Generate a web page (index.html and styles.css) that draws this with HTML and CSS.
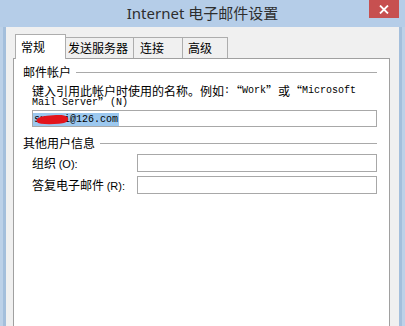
FILE: index.html
```html
<!DOCTYPE html>
<html lang="zh-CN">
<head>
<meta charset="utf-8">
<title>Internet 电子邮件设置</title>
<link rel="stylesheet" href="styles.css">
</head>
<body>
<div class="window">
  <div class="titlebar">
    <span class="spacer"></span>
    <span class="title">Internet 电子邮件设置</span>
    <span class="close">
      <svg width="10" height="9" viewBox="0 0 10 9"><path d="M1 0.5 L9 8.5 M9 0.5 L1 8.5" stroke="#fff" stroke-width="1.8" fill="none"/></svg>
    </span>
  </div>
  <div class="frame">
    <div class="client">
      <div class="tabs">
        <div class="tab tab-active">常规</div>
        <div class="tab tab-send">发送服务器</div>
        <div class="tab tab-conn">连接</div>
        <div class="tab tab-adv">高级</div>
      </div>
      <div class="panel">
        <section class="group">
          <div class="group-title">邮件帐户</div>
          <div class="group-body">
            <div class="desc">
              <div class="desc-line">键入引用此帐户时使用的名称。例如<span class="en">:</span><span class="ql">“</span><span class="en">Work</span><span class="qr">”</span>或<span class="ql">“</span><span class="en">Microsoft</span></div>
              <div class="desc-line"><span class="en">Mail Server</span><span class="qr">”</span><span class="en">(N)</span></div>
            </div>
            <div class="field field-account">
              <span class="selected">sxxxxi@126.com<svg class="scribble" width="33" height="11" viewBox="0 0 33 11"><path d="M0.5 6 C2 3.5 6 2.2 11 1.8 C17 1.2 24 0.6 28 1.4 C31 2 32.6 3.6 32.2 5.8 C31.6 8.2 28 9.4 23 9.8 C17 10.3 10 10.4 5 9.8 C2.5 9.4 0 8 0.5 6 Z" fill="#e3141c"/></svg></span>
            </div>
          </div>
        </section>
        <section class="group group-other">
          <div class="group-title">其他用户信息</div>
          <div class="group-body">
            <div class="row">
              <span class="label">组织 <span class="key">(O):</span></span>
              <div class="field"></div>
            </div>
            <div class="row">
              <span class="label">答复电子邮件 <span class="key">(R):</span></span>
              <div class="field"></div>
            </div>
          </div>
        </section>
      </div>
    </div>
  </div>
</div>
</body>
</html>
```
FILE: styles.css
```css
* { box-sizing: border-box; }
html, body { margin: 0; padding: 0; }
body {
  width: 405px;
  height: 326px;
  overflow: hidden;
  background: #b5cde8;
  font-family: "Noto Sans CJK SC", "Noto Sans", sans-serif;
  font-size: 12px;
  color: #000;
}
.window { width: 405px; height: 326px; display: flex; flex-direction: column; }

.titlebar {
  height: 27px;
  flex: none;
  display: grid;
  grid-template-columns: 1fr auto 1fr;
  padding: 0 6px;
  background: #b5cde8;
}
.title {
  font-family: "Noto Sans", "Noto Sans CJK SC", sans-serif;
  font-size: 15px;
  line-height: 26px;
  color: #2e2e2e;
  white-space: nowrap;
}
.close {
  justify-self: end;
  align-self: start;
  width: 30px;
  height: 18px;
  background: #c75050;
  display: flex;
  align-items: center;
  justify-content: center;
}

.frame {
  flex: 1;
  display: flex;
  background: #a4bfdc;
  border-left: 3px solid #bcd1e8;
  border-right: 3px solid #bcd1e8;
  padding: 0 3px;
  min-height: 0;
}
.client {
  flex: 1;
  background: #f0f0f0;
  padding: 7px 9px 0 7px;
  display: flex;
  flex-direction: column;
  min-height: 0;
}

.tabs {
  height: 24px;
  display: flex;
  align-items: flex-end;
  flex: none;
}
.tab {
  height: 21px;
  line-height: 19px;
  background: #f0f0f0;
  border-top: 1px solid #adadad;
  border-right: 1px solid #adadad;
  white-space: nowrap;
  font-size: 12px;
}
.tab-active {
  position: relative;
  z-index: 1;
  height: 25px;
  margin-bottom: -1px;
  margin-left: 2px;
  width: 51px;
  padding: 2px 0 0 5px;
  line-height: 20px;
  background: #fff;
  border-left: 1px solid #adadad;
}
.tab-send { width: 68px; padding-left: 2px; }
.tab-conn { width: 49px; padding-left: 6px; }
.tab-adv { width: 45px; padding-left: 5px; }

.panel {
  flex: 1;
  min-height: 0;
  overflow: hidden;
  background: #fff;
  border: 1px solid #a0a0a0;
  border-bottom: none;
  padding: 7px 12px 0 9px;
}

.group-title {
  display: flex;
  align-items: center;
  line-height: 12px;
  height: 12px;
}
.group-title::after {
  content: "";
  flex: 1;
  height: 1px;
  margin-left: 5px;
  margin-top: 1px;
  background: #a9a9a9;
}
.group-body { padding-left: 9px; }

.desc { margin-top: 7px; }
.desc-line {
  height: 12px;
  line-height: 12px;
  white-space: nowrap;
  display: flex;
  align-items: center;
}
.en {
  font-family: "Liberation Mono", monospace;
  font-size: 10px;
  line-height: 12px;
}
.ql, .qr { display: inline-block; width: 12px; line-height: 12px; }
.ql { text-align: right; }
.qr { text-align: left; }

.field {
  height: 17px;
  border: 1px solid #a8a8a8;
  background: #fff;
}
.field-account {
  margin-top: 1px;
  padding-top: 2px;
}
.selected {
  position: relative;
  display: inline-block;
  height: 13px;
  line-height: 13px;
  padding: 0 1px;
  background: #9cc8ef;
  font-family: "Liberation Mono", monospace;
  font-size: 10px;
  color: #000;
  vertical-align: top;
}
.scribble {
  position: absolute;
  left: 3px;
  top: 1px;
}

.group-other { margin-top: 10px; }
.row {
  display: flex;
  align-items: center;
  margin-top: 4px;
}
.row:first-child { margin-top: 5px; }
.row .field { flex: 1; height: 18px; }
.label {
  width: 105px;
  flex: none;
  white-space: nowrap;
  line-height: 12px;
}
.key {
  font-family: "Liberation Sans", sans-serif;
  font-size: 11px;
}
```
